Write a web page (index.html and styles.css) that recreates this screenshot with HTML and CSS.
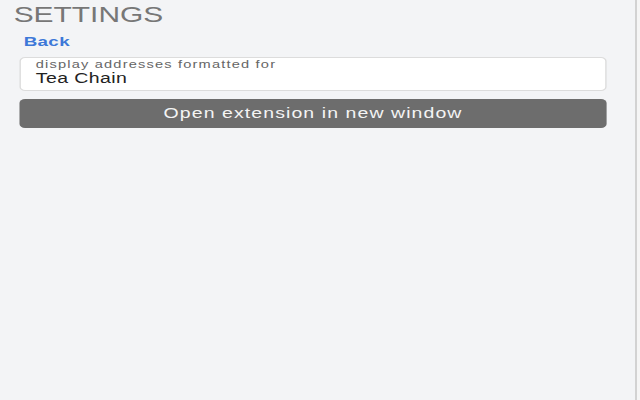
FILE: index.html
```html
<!DOCTYPE html>
<html lang="en">
<head>
<meta charset="utf-8">
<title>Settings</title>
<link rel="stylesheet" href="styles.css">
</head>
<body>
  <main class="viewport">
    <div class="page">
      <h1 class="title">SETTINGS</h1>
      <a class="back" href="#">Back</a>
      <div class="field">
        <div class="field-label">display addresses formatted for</div>
        <div class="field-value">Tea Chain</div>
      </div>
      <button class="open-btn" type="button">Open extension in new window</button>
    </div>
  </main>
  <aside class="scroll-edge"></aside>
</body>
</html>
```

FILE: styles.css
```css
html, body {
  margin: 0;
  padding: 0;
  height: 100%;
}

body {
  display: flex;
  background: #f3f4f6;
  font-family: "Liberation Sans", Arial, sans-serif;
  overflow: hidden;
}

.viewport {
  flex: 1;
  overflow: hidden;
}

.page {
  width: 460px;
  box-sizing: border-box;
  padding-left: 9.8px;
  transform: scaleX(1.3913);
  transform-origin: 0 0;
  display: flex;
  flex-direction: column;
  align-items: flex-start;
}

.title {
  margin: 3px 0 0 0;
  font-size: 21.5px;
  line-height: 24px;
  font-weight: 400;
  color: #777777;
}

.back {
  margin: 7px 0 0 7.2px;
  font-size: 13.5px;
  line-height: 15px;
  font-weight: 700;
  letter-spacing: 0.25px;
  color: #3d78d8;
  text-decoration: none;
}

.field {
  margin: 8px 0 0 3.9px;
  width: 422.7px;
  box-sizing: border-box;
  background: #ffffff;
  border: 1px solid #dcdcdc;
  border-radius: 4px;
  padding: 0 0 4px 11px;
}

.field-label {
  font-size: 10.5px;
  line-height: 12px;
  letter-spacing: 0.85px;
  color: #666666;
}

.field-value {
  font-size: 14px;
  line-height: 16px;
  letter-spacing: 0.3px;
  color: #222222;
}

.open-btn {
  margin: 8px 0 0 3.9px;
  width: 422.7px;
  height: 29px;
  border: none;
  border-radius: 4px;
  background: #6d6d6d;
  color: #f4f4f4;
  font-family: "Liberation Sans", Arial, sans-serif;
  font-size: 14px;
  line-height: 29px;
  letter-spacing: 0.78px;
  padding: 0;
  text-align: center;
}

.scroll-edge {
  width: 3px;
  flex: none;
  border-left: 2px solid #d2d2d2;
  background: #f5f5f5;
}
```
